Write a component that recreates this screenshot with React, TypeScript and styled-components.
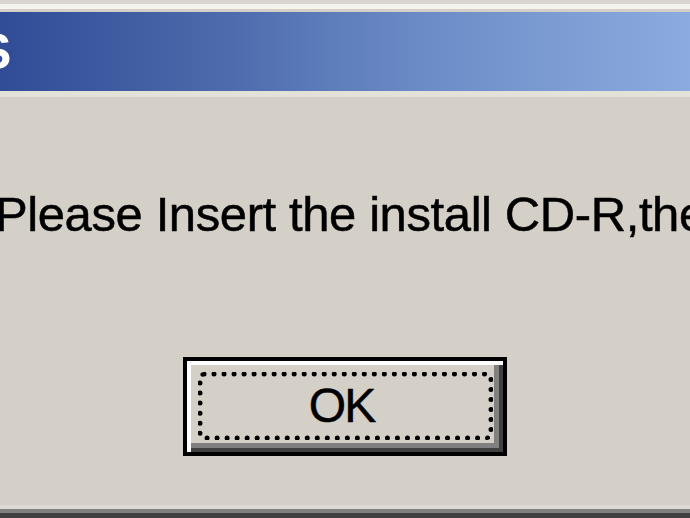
import React from "react";
import styled, { createGlobalStyle } from "styled-components";

const Global = createGlobalStyle`
  html, body {
    margin: 0;
    padding: 0;
    width: 690px;
    height: 518px;
    overflow: hidden;
    background: #d4d0c8;
  }
  * { box-sizing: border-box; }
`;

const Window = styled.div`
  width: 690px;
  height: 518px;
  overflow: hidden;
  display: flex;
  flex-direction: column;
  padding-top: 12px;
  background: #d4d0c8;
  font-family: "Liberation Sans", Arial, sans-serif;
  box-shadow:
    inset 0 4px #d8d4d0,
    inset 0 9px #f4f4ee,
    inset 0 -5px #404040,
    inset 0 -9px #808080,
    inset 0 -13px #dcdad4;
`;

const TitleBar = styled.div`
  height: 85px;
  flex: none;
  display: flex;
  align-items: center;
  overflow: hidden;
  background: linear-gradient(to right, #304c96 0%, #4a68aa 30%, #6a8ac6 60%, #8cacdf 100%);
  border-bottom: 6px solid #e4e2d8;
`;

const TitleText = styled.span`
  color: #ffffff;
  font-weight: bold;
  font-size: 50px;
  line-height: 50px;
  white-space: nowrap;
  margin-left: -22px;
`;

const Body = styled.div`
  flex: 1;
  display: flex;
  flex-direction: column;
  padding-top: 92px;
`;

const Message = styled.div`
  font-size: 49px;
  line-height: 50px;
  color: #000;
  white-space: nowrap;
  text-indent: -5px;
  letter-spacing: -0.4px;
  -webkit-text-stroke: 0.5px #000;
`;

const OkButton = styled.button`
  align-self: center;
  margin-top: 118px;
  width: 324px;
  height: 99px;
  padding: 11px 10px 12px 11px;
  display: flex;
  background: #d4d0c8;
  border: 4px solid #000;
  box-shadow:
    inset 4px 4px #ffffff,
    inset -4px -4px #404040,
    inset -9px -9px #808080;
  font-family: inherit;
  cursor: default;
`;

const FocusRect = styled.span`
  flex: 1;
  display: flex;
  align-items: center;
  justify-content: center;
  border: 5px dotted #000;
  border-radius: 6px;
  font-size: 48px;
  line-height: 48px;
  color: #000;
  padding-right: 8px;
  letter-spacing: -2px;
  -webkit-text-stroke: 0.5px #000;
`;

export default function App() {
  return (
    <>
      <Global />
      <Window>
        <TitleBar>
          <TitleText>S</TitleText>
        </TitleBar>
        <Body>
          <Message>Please Insert the install CD-R,then click OK.</Message>
          <OkButton>
            <FocusRect>OK</FocusRect>
          </OkButton>
        </Body>
      </Window>
    </>
  );
}
